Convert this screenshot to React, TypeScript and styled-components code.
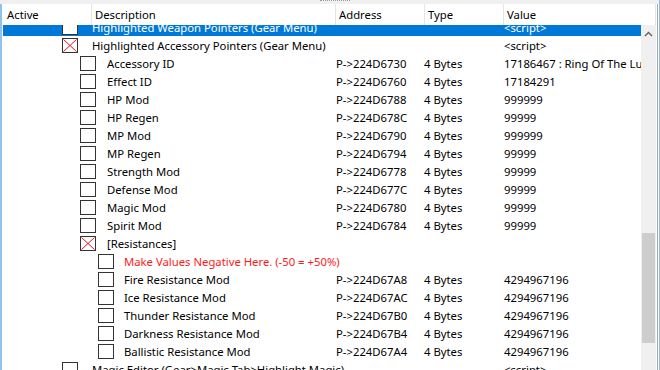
import React from "react";
import styled, { createGlobalStyle } from "styled-components";

const GlobalStyle = createGlobalStyle`
    html, body {
        margin: 0;
        padding: 0;
        background: #ffffff;
    }
    body {
        font-family: "Noto Sans", "Open Sans", sans-serif;
        font-size: 11.3px;
        color: #000000;
    }
`;

const Window = styled.div`
    width: 660px;
    height: 370px;
    overflow: hidden;
    display: flex;
    flex-direction: column;
    box-sizing: border-box;
    border-right: 1px solid #86bde9;
    background: #ffffff;
`;

const Splitter = styled.div`
    height: 4px;
    flex: none;
    background: #f0f0f0;
    display: flex;
    justify-content: center;
`;

const Grip = styled.div`
    width: 30px;
    height: 0;
    margin-left: 10px;
    border-top: 1px dotted #9a9a9a;
`;

const Frame = styled.div`
    flex: 1;
    display: flex;
    flex-direction: column;
    min-height: 0;
    border-left: 2px solid #8ec3ee;
    border-right: 1px solid #a8a8a8;
    margin-right: 1px;
`;

const Header = styled.div`
    height: 21px;
    flex: none;
    display: grid;
    grid-template-columns: 89px 244px 89px 79px 1fr;
    background: #ffffff;
`;

const HeaderCell = styled.div<{ $first?: boolean }>`
    display: flex;
    align-items: center;
    padding-left: ${(p) => (p.$first ? "5px" : "3px")};
    border-left: ${(p) => (p.$first ? "none" : "1px solid #e5e5e5")};
    white-space: nowrap;
    &:last-child {
        border-right: 1px solid #e5e5e5;
        margin-right: 1px;
    }
`;

const Body = styled.div`
    flex: 1;
    display: flex;
    min-height: 0;
`;

const List = styled.div`
    width: 639px;
    flex: none;
    overflow: hidden;
`;

const Rows = styled.div`
    margin-top: -7px;
`;

const Row = styled.div<{ $selected?: boolean }>`
    height: 18px;
    margin-left: 1px;
    display: grid;
    grid-template-columns: 332px 89px 79px 1fr;
    align-items: center;
    background: ${(p) => (p.$selected ? "#0078d7" : "transparent")};
    color: ${(p) => (p.$selected ? "#ffffff" : "#000000")};
    white-space: nowrap;
`;

const TreeCell = styled.div<{ $indent: number }>`
    display: flex;
    align-items: center;
    padding-left: ${(p) => p.$indent}px;
    overflow: visible;
`;

const Box = styled.span<{ $gap: number }>`
    width: 16px;
    height: 15px;
    flex: none;
    display: block;
    margin-right: ${(p) => p.$gap}px;
`;

const Label = styled.span<{ $red?: boolean }>`
    color: ${(p) => (p.$red ? "#ff1a1a" : "inherit")};
`;

const Cell = styled.div<{ $pad: number }>`
    padding-left: ${(p) => p.$pad}px;
    overflow: hidden;
`;

const Scrollbar = styled.div`
    width: 15px;
    flex: none;
    background: #f0f0f0;
    display: flex;
    flex-direction: column;
`;

const ArrowButton = styled.div`
    height: 17px;
    display: flex;
    align-items: center;
    justify-content: center;
`;

const Thumb = styled.div`
    margin: 191px 1px 0 1px;
    height: 110px;
    background: #cdcdcd;
`;

interface Entry {
    level: number;
    desc: string;
    address?: string;
    type?: string;
    value?: string;
    cross?: boolean;
    red?: boolean;
    selected?: boolean;
}

const entries: Entry[] = [
    { level: 1, desc: "Highlighted Weapon Pointers (Gear Menu)", value: "<script>", selected: true },
    { level: 1, desc: "Highlighted Accessory Pointers (Gear Menu)", value: "<script>", cross: true },
    { level: 2, desc: "Accessory ID", address: "P->224D6730", type: "4 Bytes", value: "17186467 : Ring Of The Luck" },
    { level: 2, desc: "Effect ID", address: "P->224D6760", type: "4 Bytes", value: "17184291" },
    { level: 2, desc: "HP Mod", address: "P->224D6788", type: "4 Bytes", value: "999999" },
    { level: 2, desc: "HP Regen", address: "P->224D678C", type: "4 Bytes", value: "99999" },
    { level: 2, desc: "MP Mod", address: "P->224D6790", type: "4 Bytes", value: "999999" },
    { level: 2, desc: "MP Regen", address: "P->224D6794", type: "4 Bytes", value: "99999" },
    { level: 2, desc: "Strength Mod", address: "P->224D6778", type: "4 Bytes", value: "99999" },
    { level: 2, desc: "Defense Mod", address: "P->224D677C", type: "4 Bytes", value: "99999" },
    { level: 2, desc: "Magic Mod", address: "P->224D6780", type: "4 Bytes", value: "99999" },
    { level: 2, desc: "Spirit Mod", address: "P->224D6784", type: "4 Bytes", value: "99999" },
    { level: 2, desc: "[Resistances]", cross: true },
    { level: 3, desc: "Make Values Negative Here. (-50 = +50%)", red: true },
    { level: 3, desc: "Fire Resistance Mod", address: "P->224D67A8", type: "4 Bytes", value: "4294967196" },
    { level: 3, desc: "Ice Resistance Mod", address: "P->224D67AC", type: "4 Bytes", value: "4294967196" },
    { level: 3, desc: "Thunder Resistance Mod", address: "P->224D67B0", type: "4 Bytes", value: "4294967196" },
    { level: 3, desc: "Darkness Resistance Mod", address: "P->224D67B4", type: "4 Bytes", value: "4294967196" },
    { level: 3, desc: "Ballistic Resistance Mod", address: "P->224D67A4", type: "4 Bytes", value: "4294967196" },
    { level: 1, desc: "Magic Editor (Gear>Magic Tab>Highlight Magic)", value: "<script>" },
];

// gap between checkbox and text differs a little per tree level
const gaps = [0, 14, 11, 10];

const CheckBox = (props: { cross?: boolean; gap: number }) => (
    <Box $gap={props.gap}>
        <svg width="16" height="15" viewBox="0 0 16 15">
            <rect x="0.5" y="0.5" width="15" height="14" fill="#ffffff" stroke="#333333" />
            {props.cross && (
                <g stroke="#e81123" strokeWidth="1">
                    <line x1="1.5" y1="1.5" x2="14.5" y2="13.5" />
                    <line x1="14.5" y1="1.5" x2="1.5" y2="13.5" />
                </g>
            )}
        </svg>
    </Box>
);

const App = () => {
    return (
        <React.Fragment>
            <GlobalStyle />
            <Window>
                <Splitter>
                    <Grip />
                </Splitter>
                <Frame>
                    <Header>
                        <HeaderCell $first>Active</HeaderCell>
                        <HeaderCell>Description</HeaderCell>
                        <HeaderCell>Address</HeaderCell>
                        <HeaderCell>Type</HeaderCell>
                        <HeaderCell>Value</HeaderCell>
                    </Header>
                    <Body>
                        <List>
                            <Rows>
                                {entries.map((e, i) => (
                                    <Row key={i} $selected={e.selected}>
                                        <TreeCell $indent={59 + 18 * (e.level - 1)}>
                                            <CheckBox cross={e.cross} gap={gaps[e.level]} />
                                            <Label $red={e.red}>{e.desc}</Label>
                                        </TreeCell>
                                        <Cell $pad={1}>{e.address}</Cell>
                                        <Cell $pad={0}>{e.type}</Cell>
                                        <Cell $pad={1}>{e.value}</Cell>
                                    </Row>
                                ))}
                            </Rows>
                        </List>
                        <Scrollbar>
                            <ArrowButton>
                                <svg width="9" height="6" viewBox="0 0 9 6">
                                    <path d="M1 5 L4.5 1.5 L8 5" fill="none" stroke="#606060" strokeWidth="1.4" />
                                </svg>
                            </ArrowButton>
                            <Thumb />
                        </Scrollbar>
                    </Body>
                </Frame>
            </Window>
        </React.Fragment>
    );
};

export default App;
